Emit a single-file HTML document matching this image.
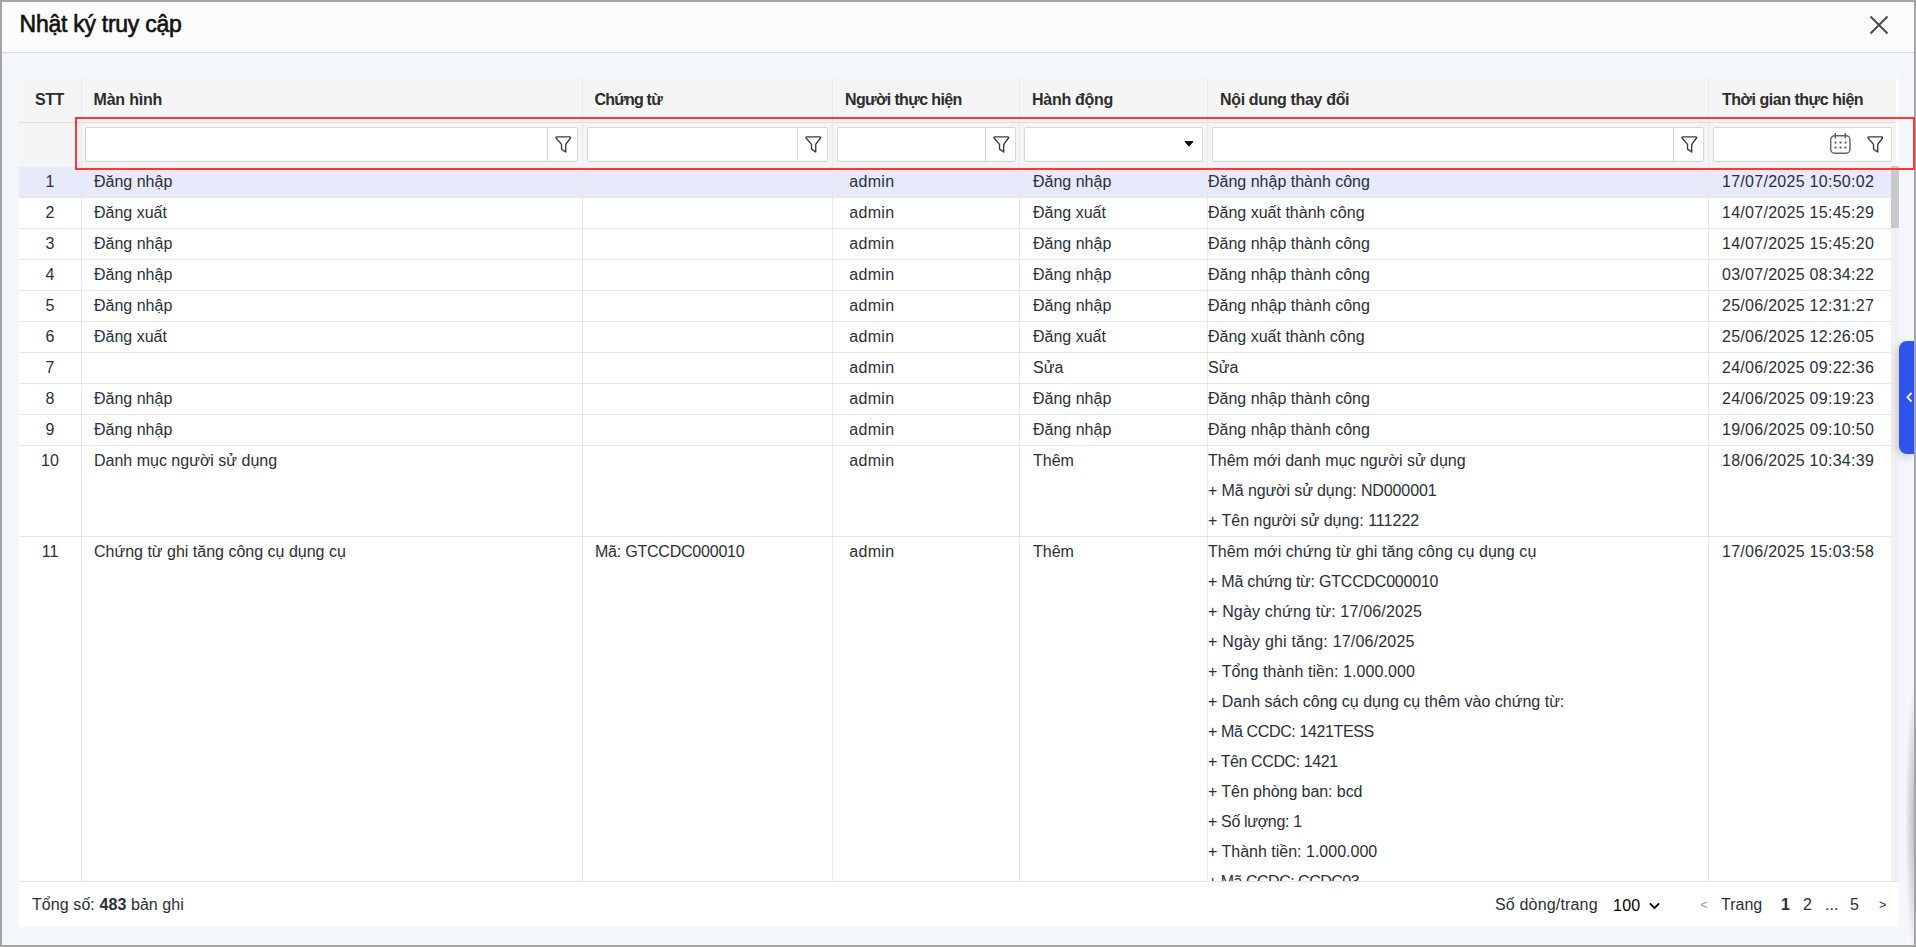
<!DOCTYPE html>
<html lang="vi">
<head>
<meta charset="utf-8">
<title>Nhật ký truy cập</title>
<style>
*{box-sizing:border-box}
html,body{margin:0;padding:0}
body{width:1916px;height:947px;overflow:hidden;position:relative;background:#f3f7fb;
  font-family:"Liberation Sans",sans-serif;font-size:16px;color:#2b2f36}
.frame{position:absolute;left:0;top:0;width:1916px;height:947px;border:2px solid #a4a4a4;border-top-width:2px;pointer-events:none;z-index:50}
.hdr{position:absolute;left:2px;top:2px;width:1912px;height:51px;background:#fcfcfd;border-bottom:1px solid #d6dbe1}
.title{position:absolute;left:17.6px;top:8.2px;font-size:23px;letter-spacing:-0.27px;line-height:28px;color:#111;white-space:nowrap;-webkit-text-stroke:0.6px #111}
.close{position:absolute;left:1867px;top:13px;width:20px;height:20px}
.panel{position:absolute;left:19px;top:78px;width:1880px;height:849px;background:#fff}
.thead{position:absolute;left:0;top:0;width:1877px;height:44px;background:#f5f5f5}
.th{position:absolute;top:0;height:44px;line-height:43px;font-weight:700;color:#2d2d2d;padding-left:12px;border-left:1px solid #e9e9e9;white-space:nowrap;letter-spacing:-0.45px}
.frow{position:absolute;left:0;top:44px;width:1877px;height:45px;background:#f5f5f5;border-top:1px solid #dfdfdf}
.fc{position:absolute;top:0;height:44px;border-left:1px solid #e9e9e9}
.inp{position:absolute;top:4px;height:35px;background:#fff;border:1px solid #d6d6d6;border-radius:2px}
.inp .btn{position:absolute;right:0;top:0;bottom:0;width:30px;border-left:1px solid #d6d6d6}
.inp svg{position:absolute}
.tbody{position:absolute;left:0;top:89px;width:1872px;height:714px;overflow:hidden;background:#fff}
.row{position:relative;width:1872px;border-bottom:1px solid #e8e8e8;line-height:30px}
.row.sel{background:#e6eafb}
.c{position:absolute;top:0;bottom:0;border-left:1px solid #e8e8e8;white-space:nowrap;overflow:hidden}
.c0{left:0;width:62px;text-align:center;border-left:none}
.c1{left:62px;width:501px;padding-left:12px}
.c2{left:563px;width:250px;padding-left:12px}
.c3{left:813px;width:187px;padding-left:16.2px;letter-spacing:0.33px}
.c4{left:1000px;width:188px;padding-left:13px}
.c5{left:1188px;width:501px;padding-left:0}
.c6{left:1689px;width:183px;padding-left:13px;letter-spacing:0.28px}
.sb{position:absolute;left:1872px;top:89px;width:7.5px;height:714px;background:#f1f1f1}
.sb i{position:absolute;left:0;top:-1px;width:7.5px;height:62px;background:#c9c9c9}
.foot{position:absolute;left:0;top:803px;width:1880px;height:46px;background:#fff;border-top:1px solid #e3e3e3;line-height:45px;white-space:nowrap}
.foot span{position:absolute;top:0}
.redbox{position:absolute;left:75px;top:117px;width:1840px;height:53px;border:2px solid #ff3636;z-index:60}
.shade{position:absolute;left:1900px;top:660px;width:14px;height:285px;z-index:30;background:radial-gradient(ellipse 11px 140px at 16px 160px, rgba(60,62,68,.36), rgba(60,62,68,.17) 55%, rgba(60,62,68,0) 100%)}
.tab{position:absolute;left:1899px;top:341px;width:15px;height:113px;background:#2f54eb;border-radius:8px 0 0 8px;z-index:40;box-shadow:-2px 3px 8px rgba(0,0,0,.18)}
</style>
</head>
<body>
<div class="hdr">
  <div class="title">Nhật ký truy cập</div>
  <svg class="close" viewBox="0 0 20 20"><path d="M1.5 1.5 L18.5 18.5 M18.5 1.5 L1.5 18.5" stroke="#4a4a4a" stroke-width="2" fill="none"/></svg>
</div>

<div class="panel">
  <div class="thead">
    <div class="th" style="left:0;width:61px;border-left:none;padding-left:0;text-align:center">STT</div>
    <div class="th" style="left:62px;width:501px;padding-left:11.5px;letter-spacing:-0.2px">Màn hình</div>
    <div class="th" style="left:563px;width:250px;padding-left:11.5px;letter-spacing:-0.8px">Chứng từ</div>
    <div class="th" style="left:813px;width:187px;letter-spacing:-0.63px">Người thực hiện</div>
    <div class="th" style="left:1000px;width:188px;letter-spacing:-0.28px">Hành động</div>
    <div class="th" style="left:1188px;width:501px;letter-spacing:-0.35px">Nội dung thay đổi</div>
    <div class="th" style="left:1689px;width:188px;padding-left:13px;letter-spacing:-0.47px">Thời gian thực hiện</div>
  </div>
  <div class="frow">
    <div class="fc" style="left:62px;width:501px"><div class="inp" style="left:3px;width:493px"><div class="btn"><svg style="left:7px;top:7.5px" width="16.6" height="17.6" viewBox="0 0 17 18"><path d="M2 0.9 H15 Q16.7 0.9 15.7 2.3 L11 8.6 V16.4 L6.7 13.4 V8.6 L1.3 2.3 Q0.3 0.9 2 0.9 Z" fill="none" stroke="#3a3a3a" stroke-width="1.4" stroke-linejoin="round"/></svg></div></div></div>
    <div class="fc" style="left:563px;width:250px"><div class="inp" style="left:4px;width:241px"><div class="btn"><svg style="left:7px;top:7.5px" width="16.6" height="17.6" viewBox="0 0 17 18"><path d="M2 0.9 H15 Q16.7 0.9 15.7 2.3 L11 8.6 V16.4 L6.7 13.4 V8.6 L1.3 2.3 Q0.3 0.9 2 0.9 Z" fill="none" stroke="#3a3a3a" stroke-width="1.4" stroke-linejoin="round"/></svg></div></div></div>
    <div class="fc" style="left:813px;width:187px"><div class="inp" style="left:4px;width:179px"><div class="btn"><svg style="left:7px;top:7.5px" width="16.6" height="17.6" viewBox="0 0 17 18"><path d="M2 0.9 H15 Q16.7 0.9 15.7 2.3 L11 8.6 V16.4 L6.7 13.4 V8.6 L1.3 2.3 Q0.3 0.9 2 0.9 Z" fill="none" stroke="#3a3a3a" stroke-width="1.4" stroke-linejoin="round"/></svg></div></div></div>
    <div class="fc" style="left:1000px;width:188px"><div class="inp" style="left:4px;width:179px"><svg style="left:158.8px;top:12.5px" width="10" height="6" viewBox="0 0 10 6"><path d="M1 0.6 H9 L5 5.2 Z" fill="#111" stroke="#111" stroke-width="1" stroke-linejoin="round"/></svg></div></div>
    <div class="fc" style="left:1188px;width:501px"><div class="inp" style="left:4px;width:492px"><div class="btn"><svg style="left:7px;top:7.5px" width="16.6" height="17.6" viewBox="0 0 17 18"><path d="M2 0.9 H15 Q16.7 0.9 15.7 2.3 L11 8.6 V16.4 L6.7 13.4 V8.6 L1.3 2.3 Q0.3 0.9 2 0.9 Z" fill="none" stroke="#3a3a3a" stroke-width="1.4" stroke-linejoin="round"/></svg></div></div></div>
    <div class="fc" style="left:1689px;width:188px"><div class="inp" style="left:4px;width:179px">
      <svg style="left:116.3px;top:5.1px" width="21" height="21" viewBox="0 0 21 21"><rect x="0.7" y="2.8" width="19.3" height="17.4" rx="3.9" fill="none" stroke="#54607f" stroke-width="1.4"/><path d="M5.3 0 V5.4 M15.3 0 V5.4" stroke="#54607f" stroke-width="1.4"/><g fill="#4b5676"><circle cx="5.5" cy="9.6" r="1.15"/><circle cx="10.5" cy="9.6" r="1.15"/><circle cx="15.5" cy="9.6" r="1.15"/><circle cx="5.5" cy="14.55" r="1.15"/><circle cx="10.5" cy="14.55" r="1.15"/><circle cx="15.5" cy="14.55" r="1.15"/></g></svg>
      <svg style="left:152.8px;top:7.8px" width="16.6" height="17.6" viewBox="0 0 17 18"><path d="M2 0.9 H15 Q16.7 0.9 15.7 2.3 L11 8.6 V16.4 L6.7 13.4 V8.6 L1.3 2.3 Q0.3 0.9 2 0.9 Z" fill="none" stroke="#3a3a3a" stroke-width="1.4" stroke-linejoin="round"/></svg>
    </div></div>
  </div>

  <div class="tbody" id="tb">
<div class="row sel" style="height:31px"><div class="c c0">1</div><div class="c c1">Đăng nhập</div><div class="c c2"></div><div class="c c3">admin</div><div class="c c4">Đăng nhập</div><div class="c c5">Đăng nhập thành công</div><div class="c c6">17/07/2025 10:50:02</div></div>
<div class="row" style="height:31px"><div class="c c0">2</div><div class="c c1">Đăng xuất</div><div class="c c2"></div><div class="c c3">admin</div><div class="c c4">Đăng xuất</div><div class="c c5">Đăng xuất thành công</div><div class="c c6">14/07/2025 15:45:29</div></div>
<div class="row" style="height:31px"><div class="c c0">3</div><div class="c c1">Đăng nhập</div><div class="c c2"></div><div class="c c3">admin</div><div class="c c4">Đăng nhập</div><div class="c c5">Đăng nhập thành công</div><div class="c c6">14/07/2025 15:45:20</div></div>
<div class="row" style="height:31px"><div class="c c0">4</div><div class="c c1">Đăng nhập</div><div class="c c2"></div><div class="c c3">admin</div><div class="c c4">Đăng nhập</div><div class="c c5">Đăng nhập thành công</div><div class="c c6">03/07/2025 08:34:22</div></div>
<div class="row" style="height:31px"><div class="c c0">5</div><div class="c c1">Đăng nhập</div><div class="c c2"></div><div class="c c3">admin</div><div class="c c4">Đăng nhập</div><div class="c c5">Đăng nhập thành công</div><div class="c c6">25/06/2025 12:31:27</div></div>
<div class="row" style="height:31px"><div class="c c0">6</div><div class="c c1">Đăng xuất</div><div class="c c2"></div><div class="c c3">admin</div><div class="c c4">Đăng xuất</div><div class="c c5">Đăng xuất thành công</div><div class="c c6">25/06/2025 12:26:05</div></div>
<div class="row" style="height:31px"><div class="c c0">7</div><div class="c c1"></div><div class="c c2"></div><div class="c c3">admin</div><div class="c c4">Sửa</div><div class="c c5">Sửa</div><div class="c c6">24/06/2025 09:22:36</div></div>
<div class="row" style="height:31px"><div class="c c0">8</div><div class="c c1">Đăng nhập</div><div class="c c2"></div><div class="c c3">admin</div><div class="c c4">Đăng nhập</div><div class="c c5">Đăng nhập thành công</div><div class="c c6">24/06/2025 09:19:23</div></div>
<div class="row" style="height:31px"><div class="c c0">9</div><div class="c c1">Đăng nhập</div><div class="c c2"></div><div class="c c3">admin</div><div class="c c4">Đăng nhập</div><div class="c c5">Đăng nhập thành công</div><div class="c c6">19/06/2025 09:10:50</div></div>
<div class="row" style="height:91px"><div class="c c0">10</div><div class="c c1">Danh mục người sử dụng</div><div class="c c2"></div><div class="c c3">admin</div><div class="c c4">Thêm</div><div class="c c5">Thêm mới danh mục người sử dụng<br><span style="letter-spacing:-0.11px">+ Mã người sử dụng: ND000001</span><br>+ Tên người sử dụng: 111222</div><div class="c c6">18/06/2025 10:34:39</div></div>
<div class="row" style="height:391px"><div class="c c0">11</div><div class="c c1">Chứng từ ghi tăng công cụ dụng cụ</div><div class="c c2" style="letter-spacing:-0.22px">Mã: GTCCDC000010</div><div class="c c3">admin</div><div class="c c4">Thêm</div><div class="c c5"><span style="letter-spacing:0.07px">Thêm mới chứng từ ghi tăng công cụ dụng cụ</span><br><span style="letter-spacing:-0.22px">+ Mã chứng từ: GTCCDC000010</span><br><span style="letter-spacing:0.17px">+ Ngày chứng từ: 17/06/2025</span><br><span style="letter-spacing:0.19px">+ Ngày ghi tăng: 17/06/2025</span><br><span style="letter-spacing:0.08px">+ Tổng thành tiền: 1.000.000</span><br>+ Danh sách công cụ dụng cụ thêm vào chứng từ:<br><span style="letter-spacing:-0.37px">+ Mã CCDC: 1421TESS</span><br><span style="letter-spacing:-0.4px">+ Tên CCDC: 1421</span><br><span style="letter-spacing:-0.07px">+ Tên phòng ban: bcd</span><br><span style="letter-spacing:-0.34px">+ Số lượng: 1</span><br>+ Thành tiền: 1.000.000<br><span style="letter-spacing:-0.5px">+ Mã CCDC: CCDC03</span><br><span style="letter-spacing:-0.5px">+ Tên CCDC: CCDC03</span></div><div class="c c6">17/06/2025 15:03:58</div></div>
  </div>
  <div class="sb"><i></i></div>
  <div class="foot">
    <span style="left:13px;letter-spacing:0.08px">Tổng số: <b>483</b> bản ghi</span>
    <span style="left:1476px;letter-spacing:0.17px">Số dòng/trang</span>
    <span style="left:1594px;top:1px;color:#000;letter-spacing:0.25px">100</span>
    <svg style="position:absolute;left:1629.6px;top:19.5px" width="11" height="8.2" viewBox="0 0 12 9"><path d="M1 1.5 L6 6.8 L11 1.5" fill="none" stroke="#000" stroke-width="2"/></svg>
    <span style="left:1681.5px;top:1px;color:#9a9a9a;font-size:12.5px">&lt;</span>
    <span style="left:1702px">Trang</span>
    <span style="left:1762px;font-weight:700">1</span>
    <span style="left:1784px">2</span>
    <span style="left:1806px">...</span>
    <span style="left:1831px">5</span>
    <span style="left:1860px;top:1px;font-size:12.5px">&gt;</span>
  </div>
</div>

<div class="redbox"></div>
<div class="tab"><svg style="position:absolute;left:6.5px;top:51px" width="6.5" height="10.5" viewBox="0 0 7 12"><path d="M6 1 L1.6 6 L6 11" fill="none" stroke="#fff" stroke-width="2.1"/></svg></div>
<div class="shade"></div>
<div class="frame"></div>
</body>
</html>
